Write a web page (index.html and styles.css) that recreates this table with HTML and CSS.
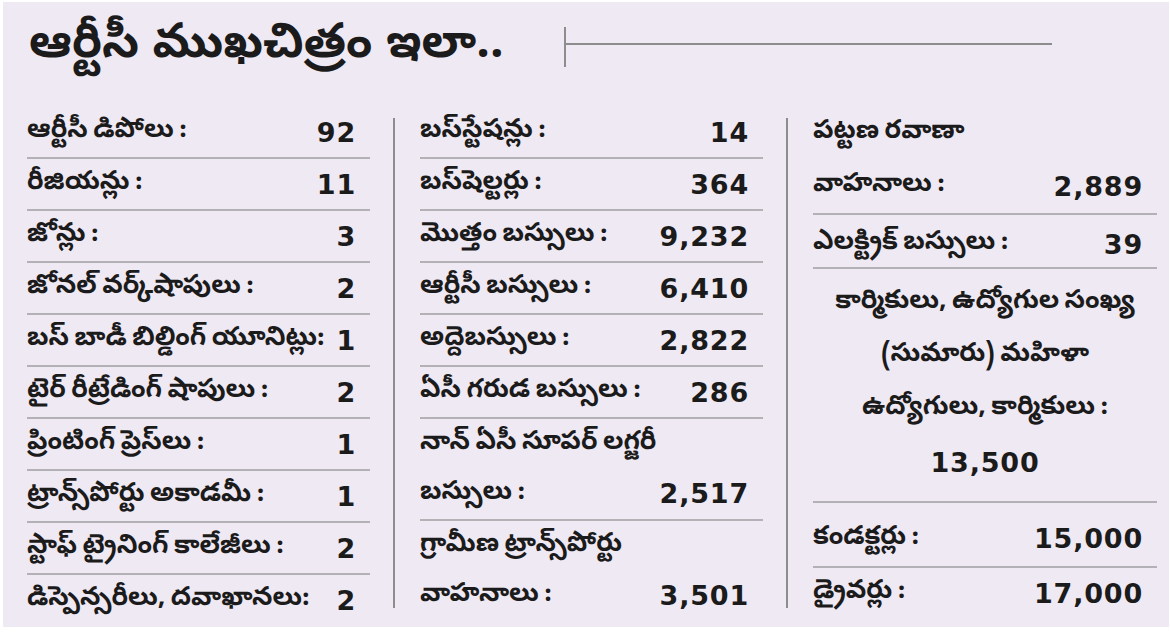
FILE: index.html
```html
<!DOCTYPE html>
<html lang="te">
<head>
<meta charset="utf-8">
<title>ఆర్టీసీ ముఖచిత్రం ఇలా..</title>
<link rel="stylesheet" href="styles.css">
</head>
<body>
<div class="card">
  <div class="header">
    <h1 class="title">ఆర్టీసీ ముఖచిత్రం ఇలా..</h1>
    <div class="rule"><span class="tick"></span><span class="line"></span></div>
  </div>
  <div class="cols">
    <div class="col first">
      <div class="row"><span class="lbl">ఆర్టీసీ డిపోలు :</span><span class="num">92</span></div>
      <div class="row"><span class="lbl">రీజియన్లు :</span><span class="num">11</span></div>
      <div class="row"><span class="lbl">జోన్లు :</span><span class="num">3</span></div>
      <div class="row"><span class="lbl">జోనల్ వర్క్‌షాపులు :</span><span class="num">2</span></div>
      <div class="row"><span class="lbl">బస్ బాడీ బిల్డింగ్ యూనిట్లు:</span><span class="num">1</span></div>
      <div class="row"><span class="lbl">టైర్ రీట్రేడింగ్ షాపులు :</span><span class="num">2</span></div>
      <div class="row"><span class="lbl">ప్రింటింగ్ ప్రెస్‌లు :</span><span class="num">1</span></div>
      <div class="row"><span class="lbl">ట్రాన్స్‌పోర్టు అకాడమీ :</span><span class="num">1</span></div>
      <div class="row"><span class="lbl">స్టాఫ్ ట్రైనింగ్ కాలేజీలు :</span><span class="num">2</span></div>
      <div class="row last"><span class="lbl">డిస్పెన్సరీలు, దవాఖానలు:</span><span class="num">2</span></div>
    </div>
    <div class="vrule"></div>
    <div class="col">
      <div class="row"><span class="lbl">బస్‌స్టేషన్లు :</span><span class="num">14</span></div>
      <div class="row"><span class="lbl">బస్‌షెల్టర్లు :</span><span class="num">364</span></div>
      <div class="row"><span class="lbl">మొత్తం బస్సులు :</span><span class="num">9,232</span></div>
      <div class="row"><span class="lbl">ఆర్టీసీ బస్సులు :</span><span class="num">6,410</span></div>
      <div class="row"><span class="lbl">అద్దెబస్సులు :</span><span class="num">2,822</span></div>
      <div class="row"><span class="lbl">ఏసీ గరుడ బస్సులు :</span><span class="num">286</span></div>
      <div class="row multi">
        <div class="ln">నాన్ ఏసీ సూపర్ లగ్జరీ</div>
        <div class="ln kv"><span class="lbl">బస్సులు :</span><span class="num">2,517</span></div>
      </div>
      <div class="row multi last">
        <div class="ln">గ్రామీణ ట్రాన్స్‌పోర్టు</div>
        <div class="ln kv"><span class="lbl">వాహనాలు :</span><span class="num">3,501</span></div>
      </div>
    </div>
    <div class="vrule"></div>
    <div class="col third">
      <div class="row multi r1">
        <div class="ln">పట్టణ రవాణా</div>
        <div class="ln kv"><span class="lbl">వాహనాలు :</span><span class="num">2,889</span></div>
      </div>
      <div class="row r2"><span class="lbl">ఎలక్ట్రిక్ బస్సులు :</span><span class="num">39</span></div>
      <div class="row center r3">
        <div class="ln">కార్మికులు, ఉద్యోగుల సంఖ్య</div>
        <div class="ln">(సుమారు) మహిళా</div>
        <div class="ln">ఉద్యోగులు, కార్మికులు :</div>
        <div class="ln num">13,500</div>
      </div>
      <div class="row r4"><span class="lbl">కండక్టర్లు :</span><span class="num">15,000</span></div>
      <div class="row last r5"><span class="lbl">డ్రైవర్లు :</span><span class="num">17,000</span></div>
    </div>
  </div>
</div>
</body>
</html>
```

FILE: styles.css
```css
html, body {
  margin: 0;
  padding: 0;
  background: #ffffff;
}

body {
  font-family: "Noto Sans Telugu", "Noto Sans", "DejaVu Sans", sans-serif;
  color: #1b1b1b;
}

.card {
  margin: 2px 1px 0 3px;
  height: 625px;
  background: #efe9f4;
  overflow: hidden;
}

.header {
  height: 105px;
  display: flex;
  align-items: flex-start;
}

.title {
  margin: 14px 0 0 26px;
  font-size: 48px;
  font-weight: 700;
  line-height: 64px;
  white-space: nowrap;
}

.rule {
  margin: 25px 0 0 0;
  display: flex;
  align-items: center;
  height: 40px;
}

.rule .tick {
  width: 2px;
  height: 40px;
  background: #8d8d8d;
  margin-left: 60px;
}

.rule .line {
  width: 486px;
  height: 2px;
  background: #8d8d8d;
  margin-top: -6px;
}

.cols {
  display: flex;
  padding-left: 24px;
}

.col {
  width: 343px;
  flex: none;
}

.vrule {
  flex: none;
  width: 2px;
  background: #8d8d8d;
  margin: 11px 25px 17px 23px;
}

.col.third {
  width: 344px;
}

.row {
  display: flex;
  justify-content: space-between;
  align-items: center;
  height: 50px;
  border-bottom: 2px solid #b3b1b6;
  font-size: 26.5px;
  font-weight: 700;
  padding-right: 14px;
  white-space: nowrap;
}

.lbl, .ln {
  word-spacing: -2px;
}

.row.last {
  border-bottom: none;
}

.row.multi {
  flex-direction: column;
  align-items: stretch;
  justify-content: flex-start;
  height: auto;
}

.ln {
  height: 50px;
  line-height: 50px;
}

.ln.kv {
  display: flex;
  justify-content: space-between;
}

.num {
  font-family: "DejaVu Sans", "Liberation Sans", sans-serif;
  font-weight: 700;
  font-size: 27px;
  letter-spacing: 0.8px;
  word-spacing: 0;
}

.third .r1 .ln {
  height: 53px;
  line-height: 53px;
}

.third .r2 {
  padding-top: 6px;
  box-sizing: border-box;
  height: 54px;
}

.row.center {
  flex-direction: column;
  align-items: center;
  justify-content: flex-start;
  height: auto;
  padding: 8px 0 12px;
}

.row.center .ln {
  height: 53px;
  line-height: 53px;
}

.third .r4 {
  box-sizing: border-box;
  padding-top: 8px;
  height: 65px;
}

.third .r5 {
  height: 50px;
}
```
